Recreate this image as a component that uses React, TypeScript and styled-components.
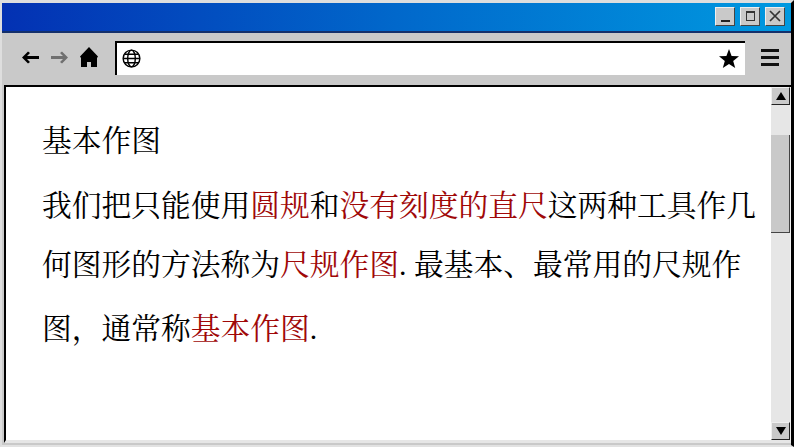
import styled, { createGlobalStyle } from "styled-components";

const GlobalStyle = createGlobalStyle`
  html, body {
    margin: 0;
    padding: 0;
    background: #fff;
  }
`;

export default function App() {
  return <Window>
    <GlobalStyle />
    <TitleBar>
      <WindowButton aria-label="minimize"><MinimizeGlyph /></WindowButton>
      <WindowButton aria-label="maximize"><MaximizeGlyph /></WindowButton>
      <WindowButton aria-label="close">
        <svg width="12" height="12" viewBox="0 0 12 12">
          <path d="M1 1 L11 11 M11 1 L1 11" stroke="#333" strokeWidth="1.7" />
        </svg>
      </WindowButton>
    </TitleBar>
    <Toolbar>
      <NavIcon>
        <svg width="17" height="13" viewBox="0 0 17 13">
          <path d="M0 6.5 L6 0.5 L8 2 L5 5 H17 V8 H5 L8 11 L6 12.5 Z" fill="#000" />
        </svg>
      </NavIcon>
      <NavIcon>
        <svg width="17" height="13" viewBox="0 0 17 13">
          <path d="M17 6.5 L11 0.5 L9 2 L12 5 H0 V8 H12 L9 11 L11 12.5 Z" fill="#707070" />
        </svg>
      </NavIcon>
      <NavIcon>
        <svg width="18" height="21" viewBox="0 0 18 21">
          <path d="M9 0 L18 9.5 L17 11 L17 20 L11 20 L11 15 L7 15 L7 20 L1 20 L1 11 L0 9.5 Z" fill="#000" />
        </svg>
      </NavIcon>
      <AddressBar>
        <svg width="19" height="19" viewBox="0 0 20 20" fill="none" stroke="#000" strokeWidth="1.5">
          <circle cx="10" cy="10" r="8.8" />
          <ellipse cx="10" cy="10" rx="4" ry="8.8" />
          <path d="M1.2 10 H18.8 M3 5.5 H17 M3 14.5 H17" />
        </svg>
        <svg width="20" height="20" viewBox="0 0 20 20">
          <path d="M10 0 L12.6 6.9 L20 7.3 L14.2 11.9 L16.2 19 L10 15 L3.8 19 L5.8 11.9 L0 7.3 L7.4 6.9 Z" fill="#000" />
        </svg>
      </AddressBar>
      <MenuButton aria-label="menu"><MenuBar /><MenuBar /><MenuBar /></MenuButton>
    </Toolbar>
    <Viewport>
      <Content>
        <Line $top={24}>基本作图</Line>
        <Line $top={6}>我们把只能使用<Red>圆规</Red>和<Red>没有刻度的直尺</Red>这两种工具作几</Line>
        <Line>何图形的方法称为<Red>尺规作图</Red>. 最基本、最常用的尺规作</Line>
        <Line $top={5}>图，通常称<Red>基本作图</Red>.</Line>
      </Content>
      <Scrollbar>
        <ScrollButton><ArrowUp /></ScrollButton>
        <ScrollTrack><ScrollThumb /></ScrollTrack>
        <ScrollButton><ArrowDown /></ScrollButton>
      </Scrollbar>
    </Viewport>
  </Window>
}

const Window = styled.div`
  width: 794px;
  height: 447px;
  box-sizing: border-box;
  display: flex;
  flex-direction: column;
  overflow: hidden;
  background: #c9c9c9;
  border-top: 3px solid #dedede;
  border-left: 2px solid #dedede;
  border-right: 3px solid #000;
  border-bottom: 2px solid #e2e2e2;
`;

const TitleBar = styled.div`
  height: 30px;
  flex-shrink: 0;
  box-sizing: border-box;
  display: flex;
  justify-content: flex-end;
  align-items: center;
  gap: 5px;
  padding: 0 6px 2px 0;
  background: linear-gradient(90deg, #0331b3 0%, #0168cb 50%, #0099e0 100%);
  border-bottom: 2px solid #14306b;
`;

const WindowButton = styled.div`
  width: 20px;
  height: 19px;
  box-sizing: border-box;
  display: flex;
  align-items: center;
  justify-content: center;
  background: #c9c9c9;
  border: 1px solid;
  border-color: #efefef #444 #444 #efefef;
`;

const MinimizeGlyph = styled.div`
  width: 9px;
  height: 2px;
  margin-top: 9px;
  background: #222;
`;

const MaximizeGlyph = styled.div`
  width: 9px;
  height: 10px;
  box-sizing: border-box;
  border: 1px solid #333;
  border-top-width: 2px;
`;

const Toolbar = styled.div`
  height: 52px;
  flex-shrink: 0;
  box-sizing: border-box;
  display: flex;
  align-items: center;
  padding: 0 0 3px 14px;
`;

const NavIcon = styled.div`
  width: 29px;
  display: flex;
  justify-content: center;
`;

const AddressBar = styled.div`
  width: 630px;
  height: 34px;
  box-sizing: border-box;
  margin-left: 12px;
  padding: 0 6px 0 5px;
  display: flex;
  align-items: center;
  justify-content: space-between;
  background: #fff;
  border-top: 2px solid #000;
  border-left: 2px solid #000;
`;

const MenuButton = styled.div`
  margin-left: 16px;
  width: 18px;
  display: flex;
  flex-direction: column;
  gap: 4px;
`;

const MenuBar = styled.div`
  height: 3px;
  background: #111;
`;

const Viewport = styled.div`
  flex: 1;
  min-height: 0;
  display: flex;
  margin: 0 0 2px 2px;
  background: #fff;
  border-top: 2px solid #000;
  border-left: 2px solid #000;
  border-bottom: 3px solid #e6e6e6;
`;

const Content = styled.div`
  flex: 1;
  padding-left: 36px;
  font-family: "Liberation Serif", "Noto Serif CJK SC", "Noto Sans CJK SC", serif;
  font-weight: 400;
  font-size: 29.75px;
  color: #000;
`;

const Line = styled.div<{ $top?: number }>`
  height: 59px;
  line-height: 59px;
  margin-top: ${p => p.$top ?? 0}px;
  white-space: nowrap;
`;

const Red = styled.span`
  color: #a00808;
`;

const Scrollbar = styled.div`
  width: 20px;
  box-sizing: border-box;
  display: flex;
  flex-direction: column;
  background: #e6e6e6;
  border-right: 1px solid #f2f2f2;
`;

const ScrollButton = styled.div`
  height: 18px;
  box-sizing: border-box;
  display: flex;
  align-items: center;
  justify-content: center;
  background: #c9c9c9;
  border: 1px solid;
  border-color: #efefef #222 #222 #efefef;
`;

const ArrowUp = styled.div`
  border-left: 5px solid transparent;
  border-right: 5px solid transparent;
  border-bottom: 8px solid #000;
`;

const ArrowDown = styled.div`
  border-left: 5px solid transparent;
  border-right: 5px solid transparent;
  border-top: 8px solid #000;
`;

const ScrollTrack = styled.div`
  flex: 1;
  padding-top: 30px;
`;

const ScrollThumb = styled.div`
  height: 98px;
  box-sizing: border-box;
  background: #c9c9c9;
  border-right: 1px solid #444;
  border-bottom: 1px solid #444;
`;
